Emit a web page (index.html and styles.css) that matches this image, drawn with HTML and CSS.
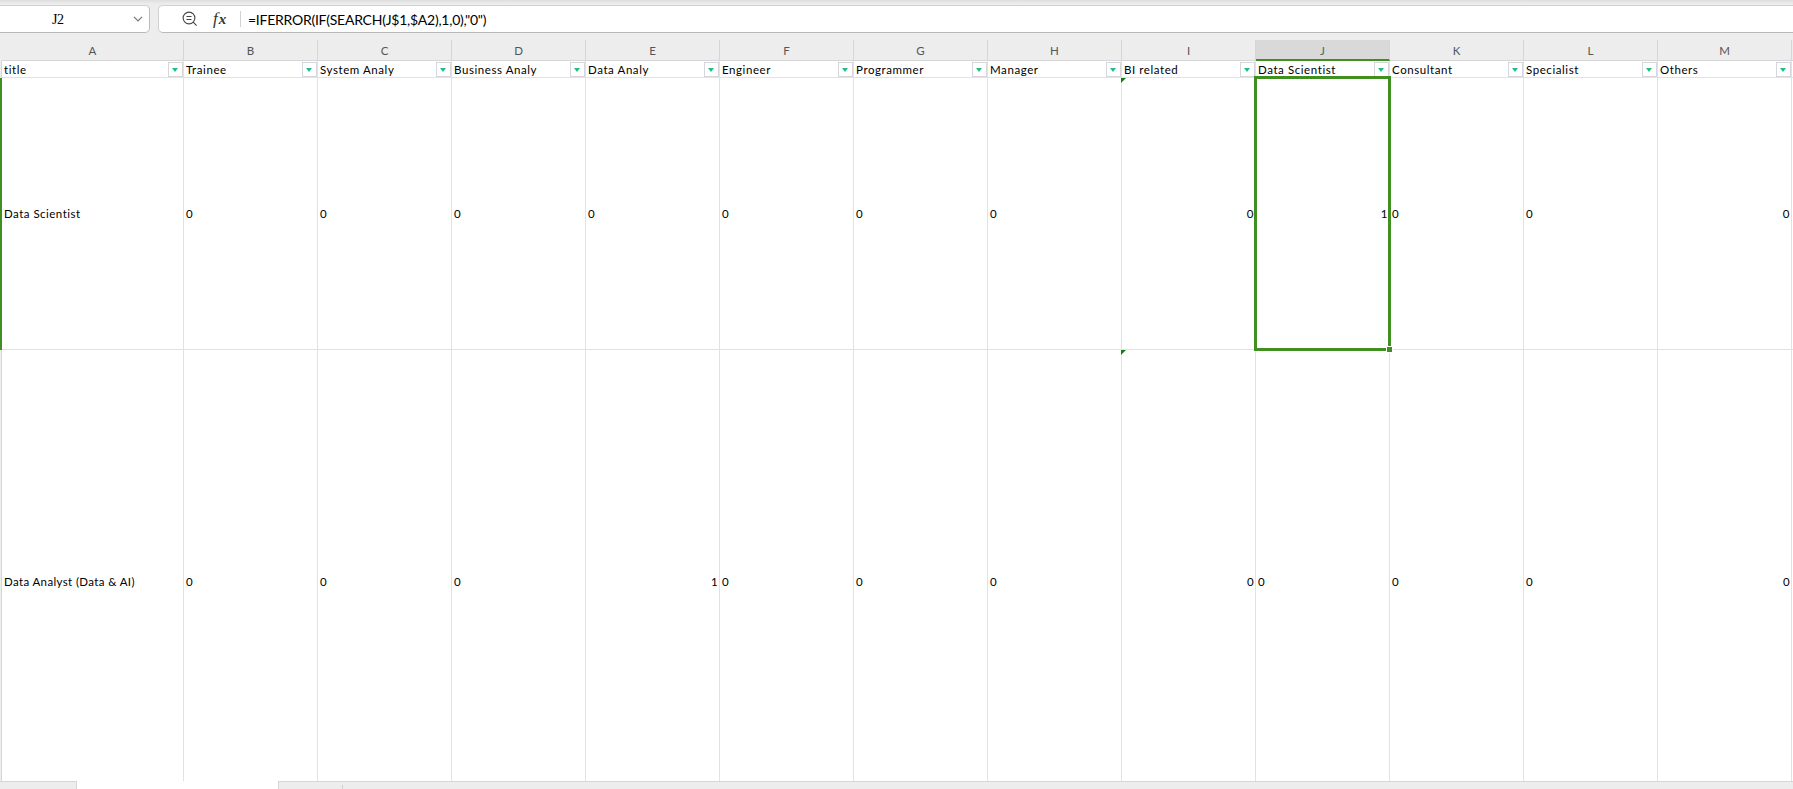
FILE: index.html
```html
<!DOCTYPE html>
<html lang="en">
<head>
<meta charset="utf-8">
<title>Spreadsheet</title>
<link rel="stylesheet" href="styles.css">
</head>
<body>
<div class="app">
  <div class="bar">
    <div class="namebox"><span class="ref">J2</span>
      <svg class="chev" width="10" height="6" viewBox="0 0 10 6"><path d="M1 .8 5 4.8 9 .8"/></svg>
    </div>
    <div class="formula">
      <svg class="mag" width="16" height="16" viewBox="0 0 16 16"><circle cx="7" cy="7" r="5.9"/><path d="M11.2 11.2 14.6 14.6M4.5 5.5h5M4.5 8.5h5"/></svg>
      <span class="fx">f<b>x</b></span>
      <span class="sep"></span>
      <span class="expr">=IFERROR(IF(SEARCH(J$1,$A2),1,0),"0")</span>
    </div>
  </div>
  <div class="grid" id="grid"></div>
  <div class="tabs"><div class="tab-left"></div><div class="tab-active"></div><div class="tab-rest"><i></i></div></div>
</div>
<script src="sheet.js"></script>
</body>
</html>
```
FILE: sheet.js
```js
const grid = document.getElementById('grid');
const titles = ['title', 'Trainee', 'System Analy', 'Business Analy', 'Data Analy', 'Engineer', 'Programmer', 'Manager', 'BI related', 'Data Scientist', 'Consultant', 'Specialist', 'Others'];
// A leading ">" marks a numeric, right-aligned value
const rows = [
  ['Data Scientist', '0', '0', '0', '0', '0', '0', '0', '>0', '>1', '0', '0', '>0'],
  ['Data Analyst (Data & AI)', '0', '0', '0', '>1', '0', '0', '0', '>0', '0', '0', '0', '>0']
];
function add(cls, text) {
  const cell = document.createElement('div');
  cell.className = cls;
  const span = document.createElement('span');
  span.textContent = text;
  cell.append(span);
  grid.append(cell);
  return cell;
}
function part(cell, cls) {
  const el = document.createElement('i');
  el.className = cls;
  cell.append(el);
}
function edge(cls) { add('cell ' + cls, ''); }

edge('gutter col');
titles.forEach((t, i) => add('cell col' + (i === 9 ? ' current' : ''), String.fromCharCode(65 + i)));
edge('col tail');
edge('gutter');
titles.forEach(t => part(add('cell title', t), 'filter'));
edge('tail');
rows.forEach((row, r) => {
  edge('gutter' + (r === 0 ? ' active' : ''));
  row.forEach((v, i) => {
    const num = v[0] === '>';
    const cell = add('cell' + (num ? ' num' : ''), num ? v.slice(1) : v);
    if (i === 8) part(cell, 'flag');
    if (r === 0 && i === 9) { part(cell, 'selection'); part(cell, 'handle'); }
  });
  edge('tail');
});
```
FILE: styles.css
```css
* { box-sizing: border-box; }
body { margin: 0; background: #ededed; font-family: Lato, "Open Sans", sans-serif; overflow: hidden; }
.app { width: 1793px; height: 789px; display: flex; flex-direction: column; }
.bar { height: 40px; flex: none; display: flex; align-items: flex-start; gap: 8px; padding-top: 5px; background: linear-gradient(#dedede 0, #ededed 4px); }
.namebox { width: 150px; height: 28px; background: #fff; border: 1px solid #d0d0d0; border-left: 0; border-bottom-color: #b8b8b8; border-right-color: #bcbcbc; border-radius: 0 5px 5px 0; display: flex; align-items: center; justify-content: space-between; padding: 0 6px 0 52px; }
.ref { font: 14px/20px "Liberation Serif", serif; letter-spacing: -.5px; padding-top: 1px; }
.chev { fill: none; stroke: #777; stroke-width: 1.2; }
.formula { flex: 1; height: 28px; background: #fff; border: 1px solid #d0d0d0; border-right: 0; border-bottom-color: #b8b8b8; border-radius: 5px 0 0 5px; display: flex; align-items: center; padding-left: 23px; }
.mag { fill: none; stroke: #444; stroke-width: 1.1; }
.fx { width: 16px; margin-left: 15px; font: italic 17px/20px "Liberation Serif", serif; color: #333; }
.fx b { font-size: 15px; margin-left: 1px; }
.sep { width: 1px; height: 16px; background: #d2d2d2; margin-left: 11px; }
.expr { margin-left: 7px; padding-top: 1px; font: 14px/20px Lato, sans-serif; letter-spacing: -.25px; color: #000; white-space: nowrap; }
.grid { height: 741px; flex: none; display: grid; grid-template-columns: 2px 182px repeat(12, 134px) 1px; grid-template-rows: 21px 17px 272px 431px; background: #fff; }
.cell { position: relative; min-width: 0; border-right: 1px solid #e2e2e2; border-bottom: 1px solid #e2e2e2; display: flex; align-items: center; padding: 1px 2px 0; font-size: 11.5px; line-height: 14px; letter-spacing: .48px; color: #000; white-space: nowrap; }
.cell:nth-last-child(-n+15) { border-bottom: 0; padding-top: 32px; letter-spacing: .37px; }
.cell.title { padding-top: 2px; letter-spacing: .58px; }
.num { justify-content: flex-end; padding-right: 1px; }
.col { justify-content: center; background: #ededed; color: #555; border-color: #d6d6d6; letter-spacing: 0; padding-top: 2px; }
.current { background: #d9d9d9; border-bottom: 2px solid #3f9020; color: #3f6f60; }
.cell.gutter { padding: 0; background: #ededed; border-right-color: #d6d6d6; border-bottom: 0; }
.cell.gutter.col { border-right: 0; }
.cell.gutter.active { background: #3f9020; border-right-color: #3f9020; }
.cell.tail { padding: 0; border-right: 0; }
.filter { position: absolute; right: 0; top: 1px; width: 15px; height: 15px; border: 1px solid #d6d6dc; background: #fff; }
.filter::after { content: ""; position: absolute; left: 3px; top: 5px; border: 3.5px solid transparent; border-top: 4px solid #1fbe82; border-bottom: 0; }
.flag { position: absolute; left: -1px; top: 0; border-top: 5px solid #108010; border-right: 5px solid transparent; }
.selection { position: absolute; left: -2px; top: -2px; right: -2px; bottom: -2px; border: 3px solid #3f9020; z-index: 2; }
.handle { position: absolute; right: -4px; bottom: -4px; width: 7px; height: 7px; background: #3f9020; border: 1px solid #fff; z-index: 3; }
.tabs { flex: none; height: 8px; display: flex; }
.tab-left { width: 77px; border-top: 1px solid #d6d6d6; border-right: 1px solid #d6d6d6; }
.tab-active { width: 201px; background: #fff; }
.tab-rest { flex: 1; border-top: 1px solid #d6d6d6; border-left: 1px solid #d6d6d6; padding: 3px 0 0 63px; }
.tab-rest i { display: block; width: 1px; height: 4px; background: #cfcfcf; }
```
